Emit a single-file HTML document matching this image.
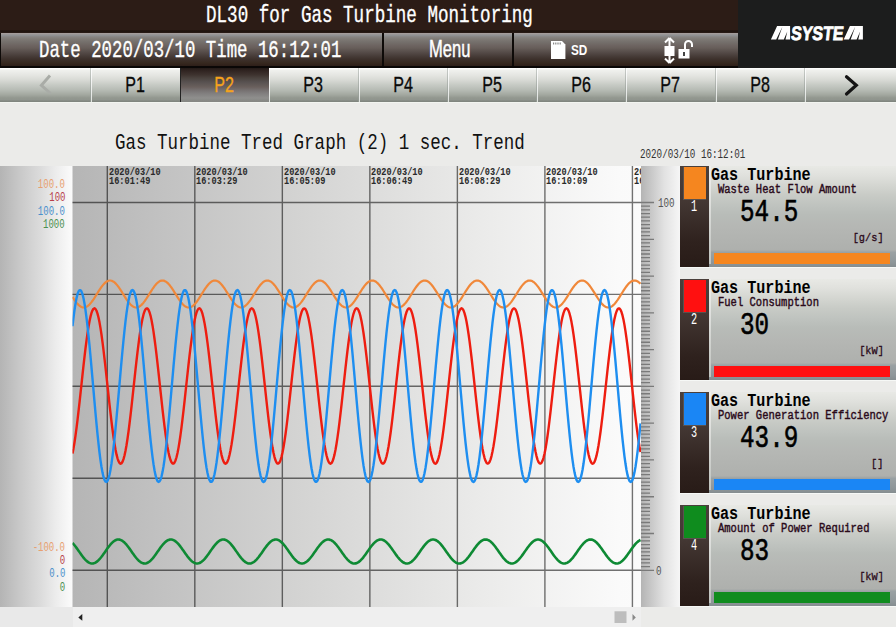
<!DOCTYPE html><html><head><meta charset="utf-8"><style>
html,body{margin:0;padding:0}
body{width:896px;height:627px;overflow:hidden;position:relative;background:#ebebe9;font-family:"Liberation Mono",monospace}
.t{position:absolute;white-space:pre;line-height:1;}
</style></head><body>
<div style="position:absolute;left:0px;top:0px;width:738px;height:33px;background:linear-gradient(#2c1c16 0%,#2c1c16 90%,#1c110c 94%,#2a1d18 100%)"></div>
<div style="position:absolute;left:738px;top:0px;width:158px;height:68px;background:#1c1d1d"></div>
<div style="position:absolute;left:0px;top:33px;width:738px;height:35px;background:#0e0a08"></div>
<div style="position:absolute;left:1px;top:33px;width:381px;height:33px;background:linear-gradient(#a8a09e 0%,#9c9898 3%,#8e9092 7.5%,#868482 12%,#7e7a76 18%,#75706c 27%,#6c6360 39%,#675e5a 45%,#524845 61%,#473c38 70%,#3d312c 79%,#36281f 91%,#2e1f19 100%);"></div>
<div style="position:absolute;left:384px;top:33px;width:128px;height:33px;background:linear-gradient(#a8a09e 0%,#9c9898 3%,#8e9092 7.5%,#868482 12%,#7e7a76 18%,#75706c 27%,#6c6360 39%,#675e5a 45%,#524845 61%,#473c38 70%,#3d312c 79%,#36281f 91%,#2e1f19 100%);"></div>
<div style="position:absolute;left:514px;top:33px;width:224px;height:33px;background:linear-gradient(#a8a09e 0%,#9c9898 3%,#8e9092 7.5%,#868482 12%,#7e7a76 18%,#75706c 27%,#6c6360 39%,#675e5a 45%,#524845 61%,#473c38 70%,#3d312c 79%,#36281f 91%,#2e1f19 100%);"></div>
<div class="t" style="left:206.40px;top:3.98px;font-size:24.3px;color:#fff;font-weight:normal;font-family:'Liberation Mono',monospace;transform-origin:left top;transform:scaleX(0.723);-webkit-text-stroke:0.35px #fff;">DL30 for Gas Turbine Monitoring</div>
<div class="t" style="left:39.00px;top:39.28px;font-size:24.3px;color:#fff;font-weight:normal;font-family:'Liberation Mono',monospace;transform-origin:left top;transform:scaleX(0.715);-webkit-text-stroke:0.35px #fff;">Date 2020/03/10 Time 16:12:01</div>
<div class="t" style="left:429.00px;top:38.08px;font-size:23.3px;color:#fff;font-weight:normal;font-family:'Liberation Sans',monospace;transform-origin:left top;transform:scaleX(0.71);-webkit-text-stroke:0.45px #fff;">Menu</div>
<div class="t" style="left:570.70px;top:43.13px;font-size:14.5px;color:#fff;font-weight:bold;font-family:'Liberation Sans',monospace;transform-origin:left top;transform:scaleX(0.81);">SD</div>
<svg style="position:absolute;left:551px;top:41px" width="15" height="18" viewBox="0 0 15 18"><path d="M0 0H11L14.4 3.4V18H0Z" fill="#fff"/><rect x="2" y="1.5" width="1.2" height="2" fill="#888"/><rect x="4.2" y="1.5" width="1.2" height="2" fill="#888"/><rect x="6.4" y="1.5" width="1.2" height="2" fill="#888"/><rect x="8.6" y="1.5" width="1.2" height="2" fill="#888"/></svg>
<svg style="position:absolute;left:663px;top:37px" width="32" height="28" viewBox="0 0 32 28"><path d="M6.5 1L2 5.5M6.5 1L11 5.5M6.5 1V26M6.5 26L2 21.5M6.5 26L11 21.5" stroke="#fff" stroke-width="2" fill="none"/><rect x="1.5" y="9" width="10" height="10" fill="#fff"/><rect x="15.5" y="12" width="11" height="9.5" fill="#fff"/><path d="M22 12V7.5a3.5 3.5 0 0 1 7 0V10" stroke="#fff" stroke-width="2" fill="none"/><rect x="20" y="15" width="2" height="4" fill="#444"/></svg>
<svg style="position:absolute;left:0;top:0" width="896" height="68"><path transform="translate(770.9,26)" d="M0 13.6L6.2 0H19.2V13.6H14.6L16.4 5.6L12.9 13.6H7.0L11.5 0.8L5.3 13.6Z" fill="#fff"/><path transform="translate(843.7,26)" d="M0 13.6L6.2 0H19.2V13.6H14.6L16.4 5.6L12.9 13.6H7.0L11.5 0.8L5.3 13.6Z" fill="#fff"/><text x="791" y="39.6" font-family="Liberation Sans" font-weight="bold" font-size="19.4" fill="#fff" textLength="52.6" lengthAdjust="spacingAndGlyphs" stroke="#fff" stroke-width="0.8" transform="skewX(-6) translate(3.6,0)">SYSTE</text></svg>
<div style="position:absolute;left:0px;top:66px;width:738px;height:2px;background:#0a0706"></div>
<div style="position:absolute;left:0px;top:102px;width:896px;height:1px;background:#f2f4f0"></div>
<div style="position:absolute;left:0px;top:68px;width:91px;height:34px;background:linear-gradient(#ffffff 0%,#fbfbfa 3%,#f0f1ee 6%,#e5e6e2 20.6%,#d8dad5 35.3%,#c6cac4 50%,#b6bbb4 64.7%,#a2a79f 79.4%,#92978f 88%,#8f948e 94%,#80857f 97%);"></div>
<div style="position:absolute;left:91px;top:68px;width:90px;height:34px;background:linear-gradient(#ffffff 0%,#fbfbfa 3%,#f0f1ee 6%,#e5e6e2 20.6%,#d8dad5 35.3%,#c6cac4 50%,#b6bbb4 64.7%,#a2a79f 79.4%,#92978f 88%,#8f948e 94%,#80857f 97%);"></div>
<div style="position:absolute;left:90px;top:68px;width:1px;height:34px;background:linear-gradient(#c8ccc8,#8f968f)"></div>
<div style="position:absolute;left:91px;top:68px;width:1px;height:34px;background:linear-gradient(#ffffff,#dfe2df)"></div>
<div class="t" style="left:135.00px;top:74.18px;font-size:22px;color:#0a0a0a;font-weight:normal;font-family:'Liberation Sans',monospace;transform-origin:center top;transform:translateX(-50%) scaleX(0.73);-webkit-text-stroke:0.35px #0a0a0a;">P1</div>
<div style="position:absolute;left:181px;top:68px;width:88px;height:34px;background:linear-gradient(#231a17 0%,#2e221f 6%,#3f3430 21%,#4a423e 29%,#575150 41%,#6a605d 56%,#757070 65%,#828080 76%,#8f8f8d 88%,#868784 97%);"></div>
<div style="position:absolute;left:180px;top:68px;width:1px;height:34px;background:#222"></div>
<div class="t" style="left:224.00px;top:74.18px;font-size:22px;color:#f5a21c;font-weight:normal;font-family:'Liberation Sans',monospace;transform-origin:center top;transform:translateX(-50%) scaleX(0.73);-webkit-text-stroke:0.35px #f5a21c;">P2</div>
<div style="position:absolute;left:269px;top:68px;width:90px;height:34px;background:linear-gradient(#ffffff 0%,#fbfbfa 3%,#f0f1ee 6%,#e5e6e2 20.6%,#d8dad5 35.3%,#c6cac4 50%,#b6bbb4 64.7%,#a2a79f 79.4%,#92978f 88%,#8f948e 94%,#80857f 97%);"></div>
<div style="position:absolute;left:269px;top:68px;width:1px;height:34px;background:linear-gradient(#ffffff,#dfe2df)"></div>
<div class="t" style="left:313.00px;top:74.18px;font-size:22px;color:#0a0a0a;font-weight:normal;font-family:'Liberation Sans',monospace;transform-origin:center top;transform:translateX(-50%) scaleX(0.73);-webkit-text-stroke:0.35px #0a0a0a;">P3</div>
<div style="position:absolute;left:359px;top:68px;width:89px;height:34px;background:linear-gradient(#ffffff 0%,#fbfbfa 3%,#f0f1ee 6%,#e5e6e2 20.6%,#d8dad5 35.3%,#c6cac4 50%,#b6bbb4 64.7%,#a2a79f 79.4%,#92978f 88%,#8f948e 94%,#80857f 97%);"></div>
<div style="position:absolute;left:358px;top:68px;width:1px;height:34px;background:linear-gradient(#c8ccc8,#8f968f)"></div>
<div style="position:absolute;left:359px;top:68px;width:1px;height:34px;background:linear-gradient(#ffffff,#dfe2df)"></div>
<div class="t" style="left:402.50px;top:74.18px;font-size:22px;color:#0a0a0a;font-weight:normal;font-family:'Liberation Sans',monospace;transform-origin:center top;transform:translateX(-50%) scaleX(0.73);-webkit-text-stroke:0.35px #0a0a0a;">P4</div>
<div style="position:absolute;left:448px;top:68px;width:89px;height:34px;background:linear-gradient(#ffffff 0%,#fbfbfa 3%,#f0f1ee 6%,#e5e6e2 20.6%,#d8dad5 35.3%,#c6cac4 50%,#b6bbb4 64.7%,#a2a79f 79.4%,#92978f 88%,#8f948e 94%,#80857f 97%);"></div>
<div style="position:absolute;left:447px;top:68px;width:1px;height:34px;background:linear-gradient(#c8ccc8,#8f968f)"></div>
<div style="position:absolute;left:448px;top:68px;width:1px;height:34px;background:linear-gradient(#ffffff,#dfe2df)"></div>
<div class="t" style="left:491.50px;top:74.18px;font-size:22px;color:#0a0a0a;font-weight:normal;font-family:'Liberation Sans',monospace;transform-origin:center top;transform:translateX(-50%) scaleX(0.73);-webkit-text-stroke:0.35px #0a0a0a;">P5</div>
<div style="position:absolute;left:537px;top:68px;width:89px;height:34px;background:linear-gradient(#ffffff 0%,#fbfbfa 3%,#f0f1ee 6%,#e5e6e2 20.6%,#d8dad5 35.3%,#c6cac4 50%,#b6bbb4 64.7%,#a2a79f 79.4%,#92978f 88%,#8f948e 94%,#80857f 97%);"></div>
<div style="position:absolute;left:536px;top:68px;width:1px;height:34px;background:linear-gradient(#c8ccc8,#8f968f)"></div>
<div style="position:absolute;left:537px;top:68px;width:1px;height:34px;background:linear-gradient(#ffffff,#dfe2df)"></div>
<div class="t" style="left:580.50px;top:74.18px;font-size:22px;color:#0a0a0a;font-weight:normal;font-family:'Liberation Sans',monospace;transform-origin:center top;transform:translateX(-50%) scaleX(0.73);-webkit-text-stroke:0.35px #0a0a0a;">P6</div>
<div style="position:absolute;left:626px;top:68px;width:90px;height:34px;background:linear-gradient(#ffffff 0%,#fbfbfa 3%,#f0f1ee 6%,#e5e6e2 20.6%,#d8dad5 35.3%,#c6cac4 50%,#b6bbb4 64.7%,#a2a79f 79.4%,#92978f 88%,#8f948e 94%,#80857f 97%);"></div>
<div style="position:absolute;left:625px;top:68px;width:1px;height:34px;background:linear-gradient(#c8ccc8,#8f968f)"></div>
<div style="position:absolute;left:626px;top:68px;width:1px;height:34px;background:linear-gradient(#ffffff,#dfe2df)"></div>
<div class="t" style="left:670.00px;top:74.18px;font-size:22px;color:#0a0a0a;font-weight:normal;font-family:'Liberation Sans',monospace;transform-origin:center top;transform:translateX(-50%) scaleX(0.73);-webkit-text-stroke:0.35px #0a0a0a;">P7</div>
<div style="position:absolute;left:716px;top:68px;width:89px;height:34px;background:linear-gradient(#ffffff 0%,#fbfbfa 3%,#f0f1ee 6%,#e5e6e2 20.6%,#d8dad5 35.3%,#c6cac4 50%,#b6bbb4 64.7%,#a2a79f 79.4%,#92978f 88%,#8f948e 94%,#80857f 97%);"></div>
<div style="position:absolute;left:715px;top:68px;width:1px;height:34px;background:linear-gradient(#c8ccc8,#8f968f)"></div>
<div style="position:absolute;left:716px;top:68px;width:1px;height:34px;background:linear-gradient(#ffffff,#dfe2df)"></div>
<div class="t" style="left:759.50px;top:74.18px;font-size:22px;color:#0a0a0a;font-weight:normal;font-family:'Liberation Sans',monospace;transform-origin:center top;transform:translateX(-50%) scaleX(0.73);-webkit-text-stroke:0.35px #0a0a0a;">P8</div>
<div style="position:absolute;left:805px;top:68px;width:91px;height:34px;background:linear-gradient(#ffffff 0%,#fbfbfa 3%,#f0f1ee 6%,#e5e6e2 20.6%,#d8dad5 35.3%,#c6cac4 50%,#b6bbb4 64.7%,#a2a79f 79.4%,#92978f 88%,#8f948e 94%,#80857f 97%);"></div>
<div style="position:absolute;left:804px;top:68px;width:1px;height:34px;background:linear-gradient(#c8ccc8,#8f968f)"></div>
<div style="position:absolute;left:805px;top:68px;width:1px;height:34px;background:linear-gradient(#ffffff,#dfe2df)"></div>
<svg style="position:absolute;left:0;top:68px" width="896" height="34"><polyline points="50,7.6 41.4,17.3 50.6,25.5" stroke="#a9aca7" stroke-width="3" fill="none"/><polyline points="846.5,8.7 856.3,17.3 846.5,26" stroke="#141414" stroke-width="3.2" fill="none" stroke-linecap="round"/></svg>
<div class="t" style="left:115.40px;top:131.53px;font-size:22.8px;color:#111;font-weight:normal;font-family:'Liberation Mono',monospace;transform-origin:left top;transform:scaleX(0.768);">Gas Turbine Tred Graph (2) 1 sec. Trend</div>
<div class="t" style="left:639.90px;top:147.99px;font-size:13.2px;color:#333;font-weight:normal;font-family:'Liberation Mono',monospace;transform-origin:left top;transform:scaleX(0.7);">2020/03/10 16:12:01</div>
<div style="position:absolute;left:0px;top:166px;width:72.5px;height:441px;background:linear-gradient(90deg,#b4b4b4 0%,#c9c9c9 28%,#dbdbdb 55%,#ececec 76%,#f8f8f8 94%,#fbfbfb 100%)"></div>
<svg style="position:absolute;left:0;top:0" width="896" height="627" viewBox="0 0 896 627"><defs><linearGradient id="pg" x1="0" x2="1" y1="0" y2="0"><stop offset="0" stop-color="#b5b5b5"/><stop offset="0.15" stop-color="#c1c1c1"/><stop offset="0.42" stop-color="#d5d5d4"/><stop offset="0.72" stop-color="#ebebea"/><stop offset="0.96" stop-color="#fafafa"/><stop offset="1" stop-color="#fbfbfb"/></linearGradient><linearGradient id="rg" x1="0" x2="1" y1="0" y2="0"><stop offset="0" stop-color="#b4b4b4"/><stop offset="0.6" stop-color="#e2e2e2"/><stop offset="1" stop-color="#f6f6f6"/></linearGradient><clipPath id="cp"><rect x="72.5" y="166" width="568.5" height="441"/></clipPath></defs><rect x="72.5" y="166" width="568.5" height="441" fill="url(#pg)"/><rect x="641" y="166" width="39" height="441" fill="url(#rg)"/><path d="M107.3 166V607M194.82 166V607M282.34 166V607M369.86 166V607M457.38 166V607M544.9 166V607M632.42 166V607M72.5 202.5H641M72.5 294.4H641M72.5 386.3H641M72.5 478.3H641M72.5 570.3H641" stroke="#000" stroke-opacity="0.55" stroke-width="1.4" fill="none"/><polyline clip-path="url(#cp)" points="72.5,296.95 73.5,298.50 74.5,299.99 75.5,301.39 76.5,302.69 77.5,303.86 78.5,304.89 79.5,305.77 80.5,306.47 81.5,307.00 82.5,307.34 83.5,307.49 84.5,307.45 85.5,307.21 86.5,306.79 87.5,306.18 88.5,305.39 89.5,304.45 90.5,303.35 91.5,302.12 92.5,300.77 93.5,299.33 94.5,297.81 95.5,296.23 96.5,294.63 97.5,293.01 98.5,291.41 99.5,289.84 100.5,288.34 101.5,286.91 102.5,285.59 103.5,284.39 104.5,283.33 105.5,282.41 106.5,281.67 107.5,281.10 108.5,280.72 109.5,280.52 110.5,280.52 111.5,280.72 112.5,281.10 113.5,281.67 114.5,282.41 115.5,283.33 116.5,284.39 117.5,285.59 118.5,286.91 119.5,288.34 120.5,289.84 121.5,291.41 122.5,293.01 123.5,294.63 124.5,296.23 125.5,297.81 126.5,299.33 127.5,300.77 128.5,302.12 129.5,303.35 130.5,304.45 131.5,305.39 132.5,306.18 133.5,306.79 134.5,307.21 135.5,307.45 136.5,307.49 137.5,307.34 138.5,307.00 139.5,306.47 140.5,305.77 141.5,304.89 142.5,303.86 143.5,302.69 144.5,301.39 145.5,299.99 146.5,298.50 147.5,296.95 148.5,295.35 149.5,293.74 150.5,292.13 151.5,290.54 152.5,289.01 153.5,287.54 154.5,286.17 155.5,284.91 156.5,283.79 157.5,282.80 158.5,281.98 159.5,281.33 160.5,280.87 161.5,280.59 162.5,280.50 163.5,280.61 164.5,280.91 165.5,281.39 166.5,282.06 167.5,282.90 168.5,283.89 169.5,285.04 170.5,286.31 171.5,287.69 172.5,289.16 173.5,290.70 174.5,292.29 175.5,293.90 176.5,295.51 177.5,297.11 178.5,298.65 179.5,300.13 180.5,301.53 181.5,302.81 182.5,303.97 183.5,304.99 184.5,305.85 185.5,306.54 186.5,307.04 187.5,307.37 188.5,307.50 189.5,307.43 190.5,307.18 191.5,306.73 192.5,306.11 193.5,305.31 194.5,304.34 195.5,303.23 196.5,301.99 197.5,300.63 198.5,299.18 199.5,297.65 200.5,296.07 201.5,294.46 202.5,292.85 203.5,291.25 204.5,289.69 205.5,288.19 206.5,286.78 207.5,285.47 208.5,284.28 209.5,283.23 210.5,282.33 211.5,281.60 212.5,281.05 213.5,280.69 214.5,280.52 215.5,280.53 216.5,280.75 217.5,281.15 218.5,281.74 219.5,282.50 220.5,283.43 221.5,284.50 222.5,285.72 223.5,287.05 224.5,288.49 225.5,290.00 226.5,291.57 227.5,293.17 228.5,294.79 229.5,296.39 230.5,297.96 231.5,299.48 232.5,300.91 233.5,302.25 234.5,303.47 235.5,304.55 236.5,305.48 237.5,306.25 238.5,306.84 239.5,307.25 240.5,307.46 241.5,307.49 242.5,307.32 243.5,306.96 244.5,306.41 245.5,305.69 246.5,304.80 247.5,303.75 248.5,302.57 249.5,301.26 250.5,299.84 251.5,298.35 252.5,296.79 253.5,295.19 254.5,293.58 255.5,291.97 256.5,290.39 257.5,288.86 258.5,287.40 259.5,286.04 260.5,284.80 261.5,283.68 262.5,282.72 263.5,281.91 264.5,281.28 265.5,280.83 266.5,280.57 267.5,280.50 268.5,280.63 269.5,280.95 270.5,281.45 271.5,282.13 272.5,282.99 273.5,284.00 274.5,285.16 275.5,286.44 276.5,287.83 277.5,289.31 278.5,290.86 279.5,292.45 280.5,294.06 281.5,295.67 282.5,297.26 283.5,298.80 284.5,300.28 285.5,301.66 286.5,302.93 287.5,304.08 288.5,305.08 289.5,305.92 290.5,306.59 291.5,307.09 292.5,307.39 293.5,307.50 294.5,307.42 295.5,307.14 296.5,306.68 297.5,306.04 298.5,305.22 299.5,304.24 300.5,303.12 301.5,301.86 302.5,300.49 303.5,299.03 304.5,297.50 305.5,295.91 306.5,294.30 307.5,292.69 308.5,291.09 309.5,289.54 310.5,288.05 311.5,286.64 312.5,285.34 313.5,284.17 314.5,283.13 315.5,282.25 316.5,281.54 317.5,281.01 318.5,280.66 319.5,280.51 320.5,280.55 321.5,280.78 322.5,281.20 323.5,281.80 324.5,282.58 325.5,283.53 326.5,284.62 327.5,285.85 328.5,287.19 329.5,288.63 330.5,290.15 331.5,291.73 332.5,293.33 333.5,294.95 334.5,296.55 335.5,298.12 336.5,299.62 337.5,301.05 338.5,302.38 339.5,303.58 340.5,304.65 341.5,305.56 342.5,306.31 343.5,306.89 344.5,307.28 345.5,307.47 346.5,307.48 347.5,307.29 348.5,306.91 349.5,306.35 350.5,305.61 351.5,304.70 352.5,303.64 353.5,302.44 354.5,301.12 355.5,299.70 356.5,298.19 357.5,296.63 358.5,295.03 359.5,293.41 360.5,291.81 361.5,290.23 362.5,288.71 363.5,287.26 364.5,285.91 365.5,284.68 366.5,283.58 367.5,282.63 368.5,281.84 369.5,281.23 370.5,280.80 371.5,280.55 372.5,280.51 373.5,280.65 374.5,280.99 375.5,281.51 376.5,282.21 377.5,283.08 378.5,284.11 379.5,285.28 380.5,286.57 381.5,287.97 382.5,289.46 383.5,291.01 384.5,292.61 385.5,294.22 386.5,295.83 387.5,297.42 388.5,298.96 389.5,300.42 390.5,301.79 391.5,303.06 392.5,304.19 393.5,305.17 394.5,306.00 395.5,306.65 396.5,307.12 397.5,307.41 398.5,307.50 399.5,307.40 400.5,307.10 401.5,306.62 402.5,305.96 403.5,305.13 404.5,304.13 405.5,303.00 406.5,301.73 407.5,300.35 408.5,298.88 409.5,297.34 410.5,295.75 411.5,294.14 412.5,292.53 413.5,290.93 414.5,289.38 415.5,287.90 416.5,286.51 417.5,285.22 418.5,284.06 419.5,283.04 420.5,282.17 421.5,281.48 422.5,280.97 423.5,280.64 424.5,280.50 425.5,280.56 426.5,280.81 427.5,281.25 428.5,281.87 429.5,282.67 430.5,283.63 431.5,284.74 432.5,285.98 433.5,287.33 434.5,288.78 435.5,290.31 436.5,291.89 437.5,293.49 438.5,295.11 439.5,296.71 440.5,298.27 441.5,299.77 442.5,301.19 443.5,302.50 444.5,303.69 445.5,304.75 446.5,305.65 447.5,306.38 448.5,306.93 449.5,307.30 450.5,307.48 451.5,307.47 452.5,307.26 453.5,306.86 454.5,306.28 455.5,305.52 456.5,304.60 457.5,303.52 458.5,302.31 459.5,300.98 460.5,299.55 461.5,298.04 462.5,296.47 463.5,294.87 464.5,293.25 465.5,291.65 466.5,290.08 467.5,288.56 468.5,287.12 469.5,285.78 470.5,284.56 471.5,283.48 472.5,282.54 473.5,281.77 474.5,281.17 475.5,280.76 476.5,280.54 477.5,280.51 478.5,280.68 479.5,281.03 480.5,281.57 481.5,282.29 482.5,283.18 483.5,284.22 484.5,285.40 485.5,286.71 486.5,288.12 487.5,289.61 488.5,291.17 489.5,292.77 490.5,294.38 491.5,295.99 492.5,297.58 493.5,299.11 494.5,300.56 495.5,301.93 496.5,303.17 497.5,304.29 498.5,305.26 499.5,306.07 500.5,306.71 501.5,307.16 502.5,307.43 503.5,307.50 504.5,307.38 505.5,307.06 506.5,306.57 507.5,305.89 508.5,305.03 509.5,304.03 510.5,302.87 511.5,301.59 512.5,300.21 513.5,298.73 514.5,297.18 515.5,295.59 516.5,293.98 517.5,292.37 518.5,290.78 519.5,289.23 520.5,287.76 521.5,286.37 522.5,285.10 523.5,283.95 524.5,282.94 525.5,282.10 526.5,281.42 527.5,280.92 528.5,280.62 529.5,280.50 530.5,280.58 531.5,280.85 532.5,281.31 533.5,281.95 534.5,282.76 535.5,283.73 536.5,284.86 537.5,286.11 538.5,287.47 539.5,288.93 540.5,290.46 541.5,292.05 542.5,293.66 543.5,295.27 544.5,296.87 545.5,298.42 546.5,299.92 547.5,301.32 548.5,302.63 549.5,303.81 550.5,304.85 551.5,305.73 552.5,306.44 553.5,306.98 554.5,307.33 555.5,307.49 556.5,307.46 557.5,307.23 558.5,306.81 559.5,306.21 560.5,305.44 561.5,304.50 562.5,303.41 563.5,302.18 564.5,300.84 565.5,299.40 566.5,297.89 567.5,296.31 568.5,294.71 569.5,293.09 570.5,291.49 571.5,289.92 572.5,288.41 573.5,286.98 574.5,285.66 575.5,284.45 576.5,283.38 577.5,282.46 578.5,281.70 579.5,281.12 580.5,280.73 581.5,280.53 582.5,280.52 583.5,280.70 584.5,281.08 585.5,281.64 586.5,282.37 587.5,283.28 588.5,284.33 589.5,285.53 590.5,286.85 591.5,288.27 592.5,289.77 593.5,291.33 594.5,292.93 595.5,294.55 596.5,296.15 597.5,297.73 598.5,299.25 599.5,300.70 600.5,302.06 601.5,303.29 602.5,304.40 603.5,305.35 604.5,306.14 605.5,306.76 606.5,307.20 607.5,307.44 608.5,307.50 609.5,307.35 610.5,307.02 611.5,306.50 612.5,305.81 613.5,304.94 614.5,303.92 615.5,302.75 616.5,301.46 617.5,300.06 618.5,298.58 619.5,297.03 620.5,295.43 621.5,293.82 622.5,292.21 623.5,290.62 624.5,289.08 625.5,287.61 626.5,286.24 627.5,284.97 628.5,283.84 629.5,282.85 630.5,282.02 631.5,281.36 632.5,280.89 633.5,280.60 634.5,280.50 635.5,280.60 636.5,280.89 637.5,281.36 638.5,282.02 639.5,282.85 640.5,283.84" stroke="#f0883a" stroke-width="2.2" fill="none" stroke-linejoin="round"/><polyline clip-path="url(#cp)" points="72.5,453.50 73.5,448.42 74.5,442.44 75.5,435.66 76.5,428.16 77.5,420.06 78.5,411.47 79.5,402.51 80.5,393.32 81.5,384.02 82.5,374.75 83.5,365.65 84.5,356.83 85.5,348.43 86.5,340.57 87.5,333.37 88.5,326.91 89.5,321.31 90.5,316.63 91.5,312.94 92.5,310.30 93.5,308.75 94.5,308.31 95.5,308.97 96.5,310.75 97.5,313.60 98.5,317.49 99.5,322.36 100.5,328.14 101.5,334.75 102.5,342.10 103.5,350.07 104.5,358.56 105.5,367.45 106.5,376.60 107.5,385.88 108.5,395.17 109.5,404.33 110.5,413.22 111.5,421.72 112.5,429.71 113.5,437.07 114.5,443.71 115.5,449.51 116.5,454.40 117.5,458.32 118.5,461.20 119.5,463.00 120.5,463.69 121.5,463.27 122.5,461.75 123.5,459.14 124.5,455.48 125.5,450.82 126.5,445.24 127.5,438.80 128.5,431.61 129.5,423.77 130.5,415.38 131.5,406.58 132.5,397.48 133.5,388.21 134.5,378.91 135.5,369.72 136.5,360.75 137.5,352.15 138.5,344.04 139.5,336.52 140.5,329.72 141.5,323.72 142.5,318.61 143.5,314.47 144.5,311.36 145.5,309.31 146.5,308.37 147.5,308.54 148.5,309.81 149.5,312.18 150.5,315.61 151.5,320.05 152.5,325.43 153.5,331.68 154.5,338.71 155.5,346.41 156.5,354.69 157.5,363.41 158.5,372.46 159.5,381.70 160.5,391.00 161.5,400.23 162.5,409.26 163.5,417.95 164.5,426.19 165.5,433.85 166.5,440.82 167.5,447.01 168.5,452.32 169.5,456.68 170.5,460.03 171.5,462.32 172.5,463.52 173.5,463.60 174.5,462.57 175.5,460.44 176.5,457.25 177.5,453.04 178.5,447.86 179.5,441.80 180.5,434.94 181.5,427.37 182.5,419.22 183.5,410.59 184.5,401.60 185.5,392.39 186.5,383.09 187.5,373.83 188.5,364.75 189.5,355.97 190.5,347.62 191.5,339.82 192.5,332.69 193.5,326.31 194.5,320.80 195.5,316.21 196.5,312.63 197.5,310.10 198.5,308.66 199.5,308.32 200.5,309.10 201.5,310.98 202.5,313.94 203.5,317.93 204.5,322.89 205.5,328.76 206.5,335.45 207.5,342.87 208.5,350.90 209.5,359.44 210.5,368.35 211.5,377.52 212.5,386.81 213.5,396.09 214.5,405.23 215.5,414.09 216.5,422.54 217.5,430.48 218.5,437.77 219.5,444.33 220.5,450.04 221.5,454.84 222.5,458.65 223.5,461.43 224.5,463.11 225.5,463.70 226.5,463.17 227.5,461.54 228.5,458.82 229.5,455.06 230.5,450.30 231.5,444.63 232.5,438.12 233.5,430.86 234.5,422.95 235.5,414.52 236.5,405.68 237.5,396.56 238.5,387.28 239.5,377.99 240.5,368.81 241.5,359.88 242.5,351.32 243.5,343.26 244.5,335.81 245.5,329.08 246.5,323.17 247.5,318.15 248.5,314.11 249.5,311.11 250.5,309.17 251.5,308.33 252.5,308.61 253.5,310.00 254.5,312.48 255.5,316.01 256.5,320.54 257.5,326.02 258.5,332.35 259.5,339.45 260.5,347.22 261.5,355.54 262.5,364.30 263.5,373.37 264.5,382.63 265.5,391.93 266.5,401.14 267.5,410.14 268.5,418.80 269.5,426.98 270.5,434.57 271.5,441.47 272.5,447.58 273.5,452.80 274.5,457.06 275.5,460.31 276.5,462.49 277.5,463.57 278.5,463.55 279.5,462.41 280.5,460.17 281.5,456.87 282.5,452.56 283.5,447.29 284.5,441.15 285.5,434.21 286.5,426.58 287.5,418.37 288.5,409.70 289.5,400.69 290.5,391.46 291.5,382.16 292.5,372.92 293.5,363.86 294.5,355.11 295.5,346.81 296.5,339.08 297.5,332.01 298.5,325.72 299.5,320.29 300.5,315.81 301.5,312.33 302.5,309.91 303.5,308.57 304.5,308.35 305.5,309.24 306.5,311.23 307.5,314.29 308.5,318.38 309.5,323.44 310.5,329.40 311.5,336.16 312.5,343.65 313.5,351.73 314.5,360.31 315.5,369.26 316.5,378.45 317.5,387.75 318.5,397.02 319.5,406.13 320.5,414.95 321.5,423.36 322.5,431.24 323.5,438.46 324.5,444.94 325.5,450.56 326.5,455.27 327.5,458.98 328.5,461.64 329.5,463.22 330.5,463.70 331.5,463.06 332.5,461.31 333.5,458.49 334.5,454.62 335.5,449.78 336.5,444.02 337.5,437.42 338.5,430.09 339.5,422.13 340.5,413.65 341.5,404.78 342.5,395.63 343.5,386.35 344.5,377.06 345.5,367.90 346.5,359.00 347.5,350.49 348.5,342.48 349.5,335.10 350.5,328.45 351.5,322.62 352.5,317.71 353.5,313.77 354.5,310.86 355.5,309.04 356.5,308.31 357.5,308.70 358.5,310.20 359.5,312.78 360.5,316.42 361.5,321.05 362.5,326.61 363.5,333.02 364.5,340.20 365.5,348.03 366.5,356.40 367.5,365.20 368.5,374.29 369.5,383.56 370.5,392.86 371.5,402.06 372.5,411.03 373.5,419.64 374.5,427.77 375.5,435.30 376.5,442.12 377.5,448.14 378.5,453.27 379.5,457.44 380.5,460.58 381.5,462.65 382.5,463.62 383.5,463.48 384.5,462.23 385.5,459.89 386.5,456.49 387.5,452.08 388.5,446.72 389.5,440.49 390.5,433.48 391.5,425.79 392.5,417.53 393.5,408.81 394.5,399.77 395.5,390.54 396.5,381.23 397.5,372.00 398.5,362.97 399.5,354.26 400.5,346.01 401.5,338.34 402.5,331.35 403.5,325.14 404.5,319.80 405.5,315.41 406.5,312.04 407.5,309.72 408.5,308.50 409.5,308.39 410.5,309.39 411.5,311.49 412.5,314.66 413.5,318.85 414.5,324.00 415.5,330.04 416.5,336.88 417.5,344.43 418.5,352.57 419.5,361.19 420.5,370.17 421.5,379.38 422.5,388.68 423.5,397.94 424.5,407.03 425.5,415.82 426.5,424.18 427.5,431.99 428.5,439.15 429.5,445.54 430.5,451.08 431.5,455.68 432.5,459.29 433.5,461.85 434.5,463.32 435.5,463.68 436.5,462.93 437.5,461.08 438.5,458.15 439.5,454.18 440.5,449.24 441.5,443.39 442.5,436.72 443.5,429.32 444.5,421.31 445.5,412.78 446.5,403.87 447.5,394.71 448.5,385.42 449.5,376.14 450.5,367.00 451.5,358.13 452.5,349.66 453.5,341.71 454.5,334.40 455.5,327.83 456.5,322.09 457.5,317.27 458.5,313.43 459.5,310.63 460.5,308.91 461.5,308.30 462.5,308.80 463.5,310.41 464.5,313.10 465.5,316.84 466.5,321.56 467.5,327.22 468.5,333.71 469.5,340.95 470.5,348.84 471.5,357.26 472.5,366.10 473.5,375.21 474.5,384.49 475.5,393.78 476.5,402.97 477.5,411.91 478.5,420.47 479.5,428.55 480.5,436.01 481.5,442.76 482.5,448.70 483.5,453.73 484.5,457.80 485.5,460.83 486.5,462.80 487.5,463.66 488.5,463.41 489.5,462.05 490.5,459.60 491.5,456.09 492.5,451.58 493.5,446.13 494.5,439.82 495.5,432.74 496.5,424.98 497.5,416.67 498.5,407.92 499.5,398.86 500.5,389.61 501.5,380.30 502.5,371.08 503.5,362.08 504.5,353.41 505.5,345.22 506.5,337.61 507.5,330.69 508.5,324.56 509.5,319.32 510.5,315.03 511.5,311.76 512.5,309.55 513.5,308.44 514.5,308.44 515.5,309.55 516.5,311.76 517.5,315.03 518.5,319.32 519.5,324.56 520.5,330.69 521.5,337.61 522.5,345.22 523.5,353.41 524.5,362.08 525.5,371.08 526.5,380.30 527.5,389.61 528.5,398.86 529.5,407.92 530.5,416.67 531.5,424.98 532.5,432.74 533.5,439.82 534.5,446.13 535.5,451.58 536.5,456.09 537.5,459.60 538.5,462.05 539.5,463.41 540.5,463.66 541.5,462.80 542.5,460.83 543.5,457.80 544.5,453.73 545.5,448.70 546.5,442.76 547.5,436.01 548.5,428.55 549.5,420.47 550.5,411.91 551.5,402.97 552.5,393.78 553.5,384.49 554.5,375.21 555.5,366.10 556.5,357.26 557.5,348.84 558.5,340.95 559.5,333.71 560.5,327.22 561.5,321.56 562.5,316.84 563.5,313.10 564.5,310.41 565.5,308.80 566.5,308.30 567.5,308.91 568.5,310.63 569.5,313.43 570.5,317.27 571.5,322.09 572.5,327.83 573.5,334.40 574.5,341.71 575.5,349.66 576.5,358.13 577.5,367.00 578.5,376.14 579.5,385.42 580.5,394.71 581.5,403.87 582.5,412.78 583.5,421.31 584.5,429.32 585.5,436.72 586.5,443.39 587.5,449.24 588.5,454.18 589.5,458.15 590.5,461.08 591.5,462.93 592.5,463.68 593.5,463.32 594.5,461.85 595.5,459.29 596.5,455.68 597.5,451.08 598.5,445.54 599.5,439.15 600.5,431.99 601.5,424.18 602.5,415.82 603.5,407.03 604.5,397.94 605.5,388.68 606.5,379.38 607.5,370.17 608.5,361.19 609.5,352.57 610.5,344.43 611.5,336.88 612.5,330.04 613.5,324.00 614.5,318.85 615.5,314.66 616.5,311.49 617.5,309.39 618.5,308.39 619.5,308.50 620.5,309.72 621.5,312.04 622.5,315.41 623.5,319.80 624.5,325.14 625.5,331.35 626.5,338.34 627.5,346.01 628.5,354.26 629.5,362.97 630.5,372.00 631.5,381.23 632.5,390.54 633.5,399.77 634.5,408.81 635.5,417.53 636.5,425.79 637.5,433.48 638.5,440.49 639.5,446.72 640.5,452.08" stroke="#ee1d10" stroke-width="2.4" fill="none" stroke-linejoin="round"/><polyline clip-path="url(#cp)" points="72.5,326.21 73.5,317.66 74.5,310.09 75.5,303.61 76.5,298.32 77.5,294.27 78.5,291.55 79.5,290.17 80.5,290.17 81.5,291.55 82.5,294.27 83.5,298.32 84.5,303.61 85.5,310.09 86.5,317.66 87.5,326.21 88.5,335.61 89.5,345.74 90.5,356.44 91.5,367.57 92.5,378.96 93.5,390.45 94.5,401.88 95.5,413.08 96.5,423.90 97.5,434.17 98.5,443.74 99.5,452.50 100.5,460.29 101.5,467.03 102.5,472.60 103.5,476.93 104.5,479.96 105.5,481.64 106.5,481.95 107.5,480.88 108.5,478.46 109.5,474.71 110.5,469.68 111.5,463.46 112.5,456.13 113.5,447.79 114.5,438.57 115.5,428.59 116.5,418.01 117.5,406.96 118.5,395.62 119.5,384.13 120.5,372.67 121.5,361.41 122.5,350.49 123.5,340.09 124.5,330.34 125.5,321.39 126.5,313.37 127.5,306.39 128.5,300.55 129.5,295.93 130.5,292.61 131.5,290.62 132.5,290.00 133.5,290.76 134.5,292.88 135.5,296.34 136.5,301.08 137.5,307.04 138.5,314.13 139.5,322.25 140.5,331.28 141.5,341.10 142.5,351.57 143.5,362.52 144.5,373.81 145.5,385.28 146.5,396.76 147.5,408.08 148.5,419.09 149.5,429.62 150.5,439.53 151.5,448.67 152.5,456.91 153.5,464.14 154.5,470.24 155.5,475.14 156.5,478.76 157.5,481.05 158.5,481.98 159.5,481.53 160.5,479.71 161.5,476.55 162.5,472.10 163.5,466.41 164.5,459.56 165.5,451.66 166.5,442.82 167.5,433.17 168.5,422.84 169.5,411.98 170.5,400.75 171.5,389.31 172.5,377.82 173.5,366.44 174.5,355.35 175.5,344.70 176.5,334.64 177.5,325.31 178.5,316.86 179.5,309.40 180.5,303.03 181.5,297.85 182.5,293.94 183.5,291.35 184.5,290.11 185.5,290.25 186.5,291.76 187.5,294.62 188.5,298.79 189.5,304.21 190.5,310.80 191.5,318.47 192.5,327.11 193.5,336.60 194.5,346.79 195.5,357.54 196.5,368.70 197.5,380.11 198.5,391.60 199.5,403.02 200.5,414.19 201.5,424.95 202.5,435.16 203.5,444.66 204.5,453.32 205.5,461.02 206.5,467.64 207.5,473.09 208.5,477.29 209.5,480.19 210.5,481.73 211.5,481.90 212.5,480.70 213.5,478.14 214.5,474.26 215.5,469.11 216.5,462.78 217.5,455.34 218.5,446.91 219.5,437.60 220.5,427.56 221.5,416.92 222.5,405.84 223.5,394.47 224.5,382.98 225.5,371.54 226.5,360.30 227.5,349.43 228.5,339.08 229.5,329.41 230.5,320.55 231.5,312.62 232.5,305.75 233.5,300.03 234.5,295.54 235.5,292.35 236.5,290.50 237.5,290.02 238.5,290.91 239.5,293.17 240.5,296.75 241.5,301.62 242.5,307.70 243.5,314.90 244.5,323.11 245.5,332.23 246.5,342.12 247.5,352.64 248.5,363.64 249.5,374.96 250.5,386.43 251.5,397.90 252.5,409.20 253.5,420.17 254.5,430.64 255.5,440.48 256.5,449.54 257.5,457.68 258.5,464.80 259.5,470.79 260.5,475.56 261.5,479.05 262.5,481.21 263.5,482.00 264.5,481.41 265.5,479.46 266.5,476.17 267.5,471.58 268.5,465.77 269.5,458.82 270.5,450.82 271.5,441.89 272.5,432.16 273.5,421.77 274.5,410.87 275.5,399.61 276.5,388.16 277.5,376.67 278.5,365.32 279.5,354.26 280.5,343.66 281.5,333.67 282.5,324.43 283.5,316.07 284.5,308.71 285.5,302.46 286.5,297.40 287.5,293.62 288.5,291.16 289.5,290.06 290.5,290.34 291.5,291.98 292.5,294.98 293.5,299.28 294.5,304.82 295.5,311.52 296.5,319.30 297.5,328.03 298.5,337.59 299.5,347.84 300.5,358.64 301.5,369.83 302.5,381.26 303.5,392.75 304.5,404.15 305.5,415.28 306.5,426.00 307.5,436.14 308.5,445.57 309.5,454.14 310.5,461.73 311.5,468.24 312.5,473.57 313.5,477.64 314.5,480.40 315.5,481.81 316.5,481.84 317.5,480.51 318.5,477.81 319.5,473.80 320.5,468.53 321.5,462.08 322.5,454.54 323.5,446.02 324.5,436.63 325.5,426.52 326.5,415.83 327.5,404.71 328.5,393.32 329.5,381.83 330.5,370.40 331.5,359.19 332.5,348.37 333.5,338.08 334.5,328.49 335.5,319.71 336.5,311.89 337.5,305.13 338.5,299.52 339.5,295.16 340.5,292.10 341.5,290.39 342.5,290.04 343.5,291.07 344.5,293.47 345.5,297.18 346.5,302.18 347.5,308.37 348.5,315.67 349.5,323.99 350.5,333.19 351.5,343.15 352.5,353.72 353.5,364.76 354.5,376.10 355.5,387.58 356.5,399.04 357.5,410.31 358.5,421.24 359.5,431.66 360.5,441.42 361.5,450.39 362.5,458.44 363.5,465.45 364.5,471.32 365.5,475.97 366.5,479.33 367.5,481.35 368.5,482.00 369.5,481.28 370.5,479.19 371.5,475.77 372.5,471.06 373.5,465.13 374.5,458.06 375.5,449.97 376.5,440.95 377.5,431.15 378.5,420.70 379.5,409.76 380.5,398.47 381.5,387.01 382.5,375.53 383.5,364.20 384.5,353.18 385.5,342.63 386.5,332.71 387.5,323.55 388.5,315.28 389.5,308.03 390.5,301.90 391.5,296.97 392.5,293.31 393.5,290.99 394.5,290.03 395.5,290.44 396.5,292.22 397.5,295.35 398.5,299.78 399.5,305.44 400.5,312.25 401.5,320.13 402.5,328.95 403.5,338.58 404.5,348.90 405.5,359.74 406.5,370.97 407.5,382.41 408.5,393.90 409.5,405.27 410.5,416.38 411.5,427.04 412.5,437.12 413.5,446.46 414.5,454.94 415.5,462.43 416.5,468.83 417.5,474.03 418.5,477.98 419.5,480.60 420.5,481.88 421.5,481.77 422.5,480.30 423.5,477.47 424.5,473.33 425.5,467.94 426.5,461.37 427.5,453.73 428.5,445.11 429.5,435.65 430.5,425.48 431.5,414.73 432.5,403.58 433.5,392.18 434.5,380.68 435.5,369.27 436.5,358.09 437.5,347.31 438.5,337.09 439.5,327.57 440.5,318.88 441.5,311.16 442.5,304.51 443.5,299.03 444.5,294.80 445.5,291.87 446.5,290.29 447.5,290.08 448.5,291.25 449.5,293.78 450.5,297.63 451.5,302.74 452.5,309.05 453.5,316.46 454.5,324.87 455.5,334.15 456.5,344.18 457.5,354.81 458.5,365.88 459.5,377.24 460.5,388.73 461.5,400.18 462.5,411.42 463.5,422.31 464.5,432.67 465.5,442.36 466.5,451.24 467.5,459.19 468.5,466.09 469.5,471.84 470.5,476.36 471.5,479.59 472.5,481.47 473.5,481.99 474.5,481.13 475.5,478.91 476.5,475.35 477.5,470.52 478.5,464.47 479.5,457.30 480.5,449.10 481.5,440.01 482.5,430.13 483.5,419.63 484.5,408.64 485.5,397.33 486.5,385.86 487.5,374.38 488.5,363.08 489.5,352.10 490.5,341.61 491.5,331.76 492.5,322.68 493.5,314.51 494.5,307.37 495.5,301.35 496.5,296.54 497.5,293.02 498.5,290.83 499.5,290.01 500.5,290.56 501.5,292.48 502.5,295.74 503.5,300.29 504.5,306.07 505.5,313.00 506.5,320.97 507.5,329.88 508.5,339.59 509.5,349.96 510.5,360.85 511.5,372.10 512.5,383.56 513.5,395.04 514.5,406.40 515.5,417.46 516.5,428.08 517.5,438.09 518.5,447.35 519.5,455.74 520.5,463.12 521.5,469.40 522.5,474.48 523.5,478.30 524.5,480.79 525.5,481.93 526.5,481.69 527.5,480.07 528.5,477.11 529.5,472.85 530.5,467.33 531.5,460.66 532.5,452.91 533.5,444.20 534.5,434.66 535.5,424.42 536.5,413.64 537.5,402.45 538.5,391.03 539.5,379.54 540.5,368.14 541.5,356.99 542.5,346.26 543.5,336.10 544.5,326.66 545.5,318.07 546.5,310.45 547.5,303.91 548.5,298.55 549.5,294.44 550.5,291.65 551.5,290.21 552.5,290.14 553.5,291.44 554.5,294.11 555.5,298.08 556.5,303.32 557.5,309.74 558.5,317.26 559.5,325.76 560.5,335.13 561.5,345.22 562.5,355.90 563.5,367.01 564.5,378.39 565.5,389.88 566.5,401.32 567.5,412.53 568.5,423.37 569.5,433.67 570.5,443.28 571.5,452.08 572.5,459.93 573.5,466.72 574.5,472.35 575.5,476.74 576.5,479.84 577.5,481.59 578.5,481.97 579.5,480.97 580.5,478.61 581.5,474.92 582.5,469.96 583.5,463.80 584.5,456.52 585.5,448.23 586.5,439.05 587.5,429.11 588.5,418.55 589.5,407.52 590.5,396.19 591.5,384.71 592.5,373.24 593.5,361.96 594.5,351.03 595.5,340.60 596.5,330.81 597.5,321.82 598.5,313.75 599.5,306.71 600.5,300.81 601.5,296.13 602.5,292.74 603.5,290.69 604.5,290.00 605.5,290.69 606.5,292.74 607.5,296.13 608.5,300.81 609.5,306.71 610.5,313.75 611.5,321.82 612.5,330.81 613.5,340.60 614.5,351.03 615.5,361.96 616.5,373.24 617.5,384.71 618.5,396.19 619.5,407.52 620.5,418.55 621.5,429.11 622.5,439.05 623.5,448.23 624.5,456.52 625.5,463.80 626.5,469.96 627.5,474.92 628.5,478.61 629.5,480.97 630.5,481.97 631.5,481.59 632.5,479.84 633.5,476.74 634.5,472.35 635.5,466.72 636.5,459.93 637.5,452.08 638.5,443.28 639.5,433.67 640.5,423.37" stroke="#1e8ef0" stroke-width="2.4" fill="none" stroke-linejoin="round"/><polyline clip-path="url(#cp)" points="72.5,543.01 73.5,544.08 74.5,545.26 75.5,546.53 76.5,547.87 77.5,549.27 78.5,550.69 79.5,552.13 80.5,553.56 81.5,554.95 82.5,556.30 83.5,557.58 84.5,558.78 85.5,559.86 86.5,560.83 87.5,561.67 88.5,562.36 89.5,562.89 90.5,563.26 91.5,563.46 92.5,563.49 93.5,563.35 94.5,563.04 95.5,562.56 96.5,561.93 97.5,561.14 98.5,560.22 99.5,559.17 100.5,558.01 101.5,556.76 102.5,555.43 103.5,554.05 104.5,552.63 105.5,551.19 106.5,549.76 107.5,548.36 108.5,547.00 109.5,545.70 110.5,544.48 111.5,543.37 112.5,542.37 113.5,541.51 114.5,540.79 115.5,540.22 116.5,539.81 117.5,539.57 118.5,539.50 119.5,539.60 120.5,539.88 121.5,540.32 122.5,540.92 123.5,541.67 124.5,542.56 125.5,543.59 126.5,544.72 127.5,545.95 128.5,547.26 129.5,548.63 130.5,550.05 131.5,551.48 132.5,552.92 133.5,554.33 134.5,555.70 135.5,557.02 136.5,558.25 137.5,559.39 138.5,560.41 139.5,561.31 140.5,562.06 141.5,562.67 142.5,563.11 143.5,563.39 144.5,563.50 145.5,563.43 146.5,563.20 147.5,562.80 148.5,562.23 149.5,561.51 150.5,560.65 151.5,559.66 152.5,558.54 153.5,557.33 154.5,556.04 155.5,554.68 156.5,553.27 157.5,551.84 158.5,550.41 159.5,548.99 160.5,547.60 161.5,546.27 162.5,545.02 163.5,543.86 164.5,542.81 165.5,541.88 166.5,541.09 167.5,540.45 168.5,539.97 169.5,539.66 170.5,539.51 171.5,539.54 172.5,539.73 173.5,540.10 174.5,540.63 175.5,541.31 176.5,542.15 177.5,543.11 178.5,544.20 179.5,545.39 180.5,546.66 181.5,548.01 182.5,549.41 183.5,550.84 184.5,552.27 185.5,553.70 186.5,555.09 187.5,556.43 188.5,557.71 189.5,558.89 190.5,559.97 191.5,560.92 192.5,561.74 193.5,562.42 194.5,562.93 195.5,563.29 196.5,563.47 197.5,563.48 198.5,563.33 199.5,563.00 200.5,562.50 201.5,561.85 202.5,561.05 203.5,560.12 204.5,559.06 205.5,557.89 206.5,556.63 207.5,555.30 208.5,553.91 209.5,552.49 210.5,551.05 211.5,549.62 212.5,548.22 213.5,546.86 214.5,545.57 215.5,544.37 216.5,543.27 217.5,542.28 218.5,541.43 219.5,540.72 220.5,540.17 221.5,539.78 222.5,539.56 223.5,539.50 224.5,539.62 225.5,539.91 226.5,540.37 227.5,540.99 228.5,541.75 229.5,542.66 230.5,543.69 231.5,544.84 232.5,546.08 233.5,547.40 234.5,548.77 235.5,550.19 236.5,551.63 237.5,553.06 238.5,554.47 239.5,555.84 240.5,557.14 241.5,558.37 242.5,559.50 243.5,560.51 244.5,561.39 245.5,562.13 246.5,562.72 247.5,563.15 248.5,563.41 249.5,563.50 250.5,563.42 251.5,563.17 252.5,562.75 253.5,562.17 254.5,561.43 255.5,560.56 256.5,559.55 257.5,558.43 258.5,557.21 259.5,555.90 260.5,554.54 261.5,553.13 262.5,551.70 263.5,550.26 264.5,548.84 265.5,547.47 266.5,546.14 267.5,544.90 268.5,543.75 269.5,542.71 270.5,541.80 271.5,541.02 272.5,540.40 273.5,539.93 274.5,539.63 275.5,539.51 276.5,539.55 277.5,539.76 278.5,540.15 279.5,540.69 280.5,541.39 281.5,542.24 282.5,543.21 283.5,544.31 284.5,545.51 285.5,546.80 286.5,548.15 287.5,549.55 288.5,550.98 289.5,552.42 290.5,553.84 291.5,555.23 292.5,556.57 293.5,557.83 294.5,559.00 295.5,560.07 296.5,561.01 297.5,561.82 298.5,562.48 299.5,562.98 300.5,563.31 301.5,563.48 302.5,563.48 303.5,563.30 304.5,562.96 305.5,562.45 306.5,561.78 307.5,560.97 308.5,560.02 309.5,558.95 310.5,557.77 311.5,556.50 312.5,555.16 313.5,553.77 314.5,552.34 315.5,550.91 316.5,549.48 317.5,548.08 318.5,546.73 319.5,545.45 320.5,544.25 321.5,543.16 322.5,542.19 323.5,541.35 324.5,540.66 325.5,540.12 326.5,539.75 327.5,539.54 328.5,539.51 329.5,539.65 330.5,539.95 331.5,540.43 332.5,541.06 333.5,541.84 334.5,542.76 335.5,543.80 336.5,544.96 337.5,546.21 338.5,547.53 339.5,548.91 340.5,550.33 341.5,551.77 342.5,553.20 343.5,554.61 344.5,555.97 345.5,557.27 346.5,558.49 347.5,559.60 348.5,560.60 349.5,561.47 350.5,562.20 351.5,562.77 352.5,563.18 353.5,563.43 354.5,563.50 355.5,563.40 356.5,563.13 357.5,562.70 358.5,562.10 359.5,561.35 360.5,560.46 361.5,559.44 362.5,558.31 363.5,557.08 364.5,555.77 365.5,554.40 366.5,552.99 367.5,551.55 368.5,550.12 369.5,548.70 370.5,547.33 371.5,546.02 372.5,544.78 373.5,543.64 374.5,542.61 375.5,541.71 376.5,540.95 377.5,540.34 378.5,539.90 379.5,539.61 380.5,539.50 381.5,539.56 382.5,539.79 383.5,540.19 384.5,540.75 385.5,541.47 386.5,542.33 387.5,543.32 388.5,544.43 389.5,545.64 390.5,546.93 391.5,548.29 392.5,549.69 393.5,551.12 394.5,552.56 395.5,553.98 396.5,555.37 397.5,556.70 398.5,557.95 399.5,559.11 400.5,560.17 401.5,561.10 402.5,561.89 403.5,562.53 404.5,563.02 405.5,563.34 406.5,563.49 407.5,563.47 408.5,563.27 409.5,562.91 410.5,562.39 411.5,561.70 412.5,560.88 413.5,559.92 414.5,558.83 415.5,557.64 416.5,556.37 417.5,555.02 418.5,553.63 419.5,552.20 420.5,550.76 421.5,549.34 422.5,547.94 423.5,546.60 424.5,545.32 425.5,544.14 426.5,543.06 427.5,542.10 428.5,541.28 429.5,540.60 430.5,540.08 431.5,539.72 432.5,539.53 433.5,539.51 434.5,539.67 435.5,539.99 436.5,540.48 437.5,541.13 438.5,541.92 439.5,542.86 440.5,543.91 441.5,545.08 442.5,546.34 443.5,547.67 444.5,549.06 445.5,550.48 446.5,551.91 447.5,553.34 448.5,554.75 449.5,556.10 450.5,557.40 451.5,558.60 452.5,559.71 453.5,560.70 454.5,561.55 455.5,562.26 456.5,562.82 457.5,563.21 458.5,563.44 459.5,563.50 460.5,563.38 461.5,563.09 462.5,562.64 463.5,562.03 464.5,561.27 465.5,560.36 466.5,559.33 467.5,558.19 468.5,556.95 469.5,555.64 470.5,554.26 471.5,552.84 472.5,551.41 473.5,549.98 474.5,548.57 475.5,547.20 476.5,545.89 477.5,544.66 478.5,543.53 479.5,542.52 480.5,541.63 481.5,540.88 482.5,540.29 483.5,539.86 484.5,539.59 485.5,539.50 486.5,539.58 487.5,539.83 488.5,540.24 489.5,540.82 490.5,541.55 491.5,542.42 492.5,543.42 493.5,544.54 494.5,545.76 495.5,547.06 496.5,548.43 497.5,549.83 498.5,551.27 499.5,552.70 500.5,554.12 501.5,555.50 502.5,556.82 503.5,558.07 504.5,559.22 505.5,560.27 506.5,561.18 507.5,561.96 508.5,562.59 509.5,563.06 510.5,563.36 511.5,563.49 512.5,563.45 513.5,563.24 514.5,562.87 515.5,562.32 516.5,561.63 517.5,560.79 518.5,559.81 519.5,558.72 520.5,557.52 521.5,556.24 522.5,554.89 523.5,553.49 524.5,552.06 525.5,550.62 526.5,549.20 527.5,547.81 528.5,546.47 529.5,545.20 530.5,544.03 531.5,542.96 532.5,542.01 533.5,541.20 534.5,540.54 535.5,540.03 536.5,539.69 537.5,539.52 538.5,539.52 539.5,539.69 540.5,540.03 541.5,540.54 542.5,541.20 543.5,542.01 544.5,542.96 545.5,544.03 546.5,545.20 547.5,546.47 548.5,547.81 549.5,549.20 550.5,550.62 551.5,552.06 552.5,553.49 553.5,554.89 554.5,556.24 555.5,557.52 556.5,558.72 557.5,559.81 558.5,560.79 559.5,561.63 560.5,562.32 561.5,562.87 562.5,563.24 563.5,563.45 564.5,563.49 565.5,563.36 566.5,563.06 567.5,562.59 568.5,561.96 569.5,561.18 570.5,560.27 571.5,559.22 572.5,558.07 573.5,556.82 574.5,555.50 575.5,554.12 576.5,552.70 577.5,551.27 578.5,549.83 579.5,548.43 580.5,547.06 581.5,545.76 582.5,544.54 583.5,543.42 584.5,542.42 585.5,541.55 586.5,540.82 587.5,540.24 588.5,539.83 589.5,539.58 590.5,539.50 591.5,539.59 592.5,539.86 593.5,540.29 594.5,540.88 595.5,541.63 596.5,542.52 597.5,543.53 598.5,544.66 599.5,545.89 600.5,547.20 601.5,548.57 602.5,549.98 603.5,551.41 604.5,552.84 605.5,554.26 606.5,555.64 607.5,556.95 608.5,558.19 609.5,559.33 610.5,560.36 611.5,561.27 612.5,562.03 613.5,562.64 614.5,563.09 615.5,563.38 616.5,563.50 617.5,563.44 618.5,563.21 619.5,562.82 620.5,562.26 621.5,561.55 622.5,560.70 623.5,559.71 624.5,558.60 625.5,557.40 626.5,556.10 627.5,554.75 628.5,553.34 629.5,551.91 630.5,550.48 631.5,549.06 632.5,547.67 633.5,546.34 634.5,545.08 635.5,543.91 636.5,542.86 637.5,541.92 638.5,541.13 639.5,540.48 640.5,539.99" stroke="#0e8a34" stroke-width="2.6" fill="none" stroke-linejoin="round"/><path d="M641 570.30H654M641 566.62H650M641 562.94H650M641 559.27H650M641 555.59H650M641 551.91H650M641 548.23H650M641 544.55H650M641 540.88H650M641 537.20H650M641 533.52H654M641 529.84H650M641 526.16H650M641 522.49H650M641 518.81H650M641 515.13H650M641 511.45H650M641 507.77H650M641 504.10H650M641 500.42H650M641 496.74H654M641 493.06H650M641 489.38H650M641 485.71H650M641 482.03H650M641 478.35H650M641 474.67H650M641 470.99H650M641 467.32H650M641 463.64H650M641 459.96H654M641 456.28H650M641 452.60H650M641 448.93H650M641 445.25H650M641 441.57H650M641 437.89H650M641 434.21H650M641 430.54H650M641 426.86H650M641 423.18H654M641 419.50H650M641 415.82H650M641 412.15H650M641 408.47H650M641 404.79H650M641 401.11H650M641 397.43H650M641 393.76H650M641 390.08H650M641 386.40H654M641 382.72H650M641 379.04H650M641 375.37H650M641 371.69H650M641 368.01H650M641 364.33H650M641 360.65H650M641 356.98H650M641 353.30H650M641 349.62H654M641 345.94H650M641 342.26H650M641 338.59H650M641 334.91H650M641 331.23H650M641 327.55H650M641 323.87H650M641 320.20H650M641 316.52H650M641 312.84H654M641 309.16H650M641 305.48H650M641 301.81H650M641 298.13H650M641 294.45H650M641 290.77H650M641 287.09H650M641 283.42H650M641 279.74H650M641 276.06H654M641 272.38H650M641 268.70H650M641 265.03H650M641 261.35H650M641 257.67H650M641 253.99H650M641 250.31H650M641 246.64H650M641 242.96H650M641 239.28H654M641 235.60H650M641 231.92H650M641 228.25H650M641 224.57H650M641 220.89H650M641 217.21H650M641 213.53H650M641 209.86H650M641 206.18H650M641 202.50H654" stroke="#7a7a7a" stroke-width="1.3" fill="none"/></svg>
<div class="t" style="left:658.00px;top:196.89px;font-size:13.2px;color:#555;font-weight:normal;font-family:'Liberation Mono',monospace;transform-origin:left top;transform:scaleX(0.7);">100</div>
<div class="t" style="left:656.00px;top:564.89px;font-size:13.2px;color:#555;font-weight:normal;font-family:'Liberation Mono',monospace;transform-origin:left top;transform:scaleX(0.7);">0</div>
<div class="t" style="right:831.00px;top:178.28px;font-size:13.6px;color:#e8a070;font-weight:normal;font-family:'Liberation Mono',monospace;transform-origin:right top;transform:scaleX(0.66);">100.0</div>
<div class="t" style="right:831.00px;top:191.48px;font-size:13.6px;color:#b8404a;font-weight:normal;font-family:'Liberation Mono',monospace;transform-origin:right top;transform:scaleX(0.66);">100</div>
<div class="t" style="right:831.00px;top:204.68px;font-size:13.6px;color:#4a90cc;font-weight:normal;font-family:'Liberation Mono',monospace;transform-origin:right top;transform:scaleX(0.66);">100.0</div>
<div class="t" style="right:831.00px;top:217.88px;font-size:13.6px;color:#4a9050;font-weight:normal;font-family:'Liberation Mono',monospace;transform-origin:right top;transform:scaleX(0.66);">1000</div>
<div class="t" style="right:831.00px;top:540.88px;font-size:13.6px;color:#e8a070;font-weight:normal;font-family:'Liberation Mono',monospace;transform-origin:right top;transform:scaleX(0.66);">-100.0</div>
<div class="t" style="right:831.00px;top:553.78px;font-size:13.6px;color:#b8404a;font-weight:normal;font-family:'Liberation Mono',monospace;transform-origin:right top;transform:scaleX(0.66);">0</div>
<div class="t" style="right:831.00px;top:567.18px;font-size:13.6px;color:#4a90cc;font-weight:normal;font-family:'Liberation Mono',monospace;transform-origin:right top;transform:scaleX(0.66);">0.0</div>
<div class="t" style="right:831.00px;top:580.58px;font-size:13.6px;color:#4a9050;font-weight:normal;font-family:'Liberation Mono',monospace;transform-origin:right top;transform:scaleX(0.66);">0</div>
<div style="position:absolute;left:108.5px;top:166px;width:60.0px;height:22px;overflow:hidden"><div class="t" style="left:0;top:2.3px;font-size:11.2px;line-height:9.1px;font-weight:bold;color:#2a2a2a;transform-origin:left top;transform:scaleX(0.77)">2020/03/10<br>16:01:49</div></div>
<div style="position:absolute;left:196.0px;top:166px;width:60.0px;height:22px;overflow:hidden"><div class="t" style="left:0;top:2.3px;font-size:11.2px;line-height:9.1px;font-weight:bold;color:#2a2a2a;transform-origin:left top;transform:scaleX(0.77)">2020/03/10<br>16:03:29</div></div>
<div style="position:absolute;left:283.5px;top:166px;width:60.0px;height:22px;overflow:hidden"><div class="t" style="left:0;top:2.3px;font-size:11.2px;line-height:9.1px;font-weight:bold;color:#2a2a2a;transform-origin:left top;transform:scaleX(0.77)">2020/03/10<br>16:05:09</div></div>
<div style="position:absolute;left:371.1px;top:166px;width:60.0px;height:22px;overflow:hidden"><div class="t" style="left:0;top:2.3px;font-size:11.2px;line-height:9.1px;font-weight:bold;color:#2a2a2a;transform-origin:left top;transform:scaleX(0.77)">2020/03/10<br>16:06:49</div></div>
<div style="position:absolute;left:458.6px;top:166px;width:60.0px;height:22px;overflow:hidden"><div class="t" style="left:0;top:2.3px;font-size:11.2px;line-height:9.1px;font-weight:bold;color:#2a2a2a;transform-origin:left top;transform:scaleX(0.77)">2020/03/10<br>16:08:29</div></div>
<div style="position:absolute;left:546.1px;top:166px;width:60.0px;height:22px;overflow:hidden"><div class="t" style="left:0;top:2.3px;font-size:11.2px;line-height:9.1px;font-weight:bold;color:#2a2a2a;transform-origin:left top;transform:scaleX(0.77)">2020/03/10<br>16:10:09</div></div>
<div style="position:absolute;left:633.6px;top:166px;width:7.4px;height:22px;overflow:hidden"><div class="t" style="left:0;top:2.3px;font-size:11.2px;line-height:9.1px;font-weight:bold;color:#2a2a2a;transform-origin:left top;transform:scaleX(0.77)">2020/03/10<br>16:11:49</div></div>
<div style="position:absolute;left:0px;top:607px;width:72.5px;height:20px;background:#e9e9e9"></div>
<div style="position:absolute;left:72.5px;top:607px;width:568.5px;height:20px;background:#efefef"></div>
<div style="position:absolute;left:641px;top:607px;width:255px;height:20px;background:#ebebe9"></div>
<svg style="position:absolute;left:0;top:600px" width="700" height="27"><path d="M78.3 17.4L82.3 14V20.8Z" fill="#222"/><rect x="614.5" y="11.3" width="12" height="11.7" fill="#bdbdbd"/><path d="M632.5 14V20.8L635.8 17.4Z" fill="#888"/></svg>
<div style="position:absolute;left:680px;top:166px;width:216px;height:101px;background:#7a7f82"></div>
<div style="position:absolute;left:709px;top:166px;width:187px;height:101px;background:linear-gradient(#e8e9e5 0%,#e0e1dd 9%,#d4d6d1 19%,#c8cbc6 29%,#bfc3bf 39%,#b8bcb8 48%,#b5b7b4 60%,#aeb0ad 83%,#9aa1a3 85.5%,#8f979a 95%,#858d90 100%)"></div>
<div style="position:absolute;left:680px;top:267px;width:216px;height:1px;background:#f6f8f6"></div>
<div style="position:absolute;left:709px;top:166px;width:2px;height:98px;background:linear-gradient(#f0f0ee,#c0c3bf)"></div>
<div style="position:absolute;left:680px;top:166px;width:29px;height:101px;background:linear-gradient(#4a3f3b 0%,#433733 35%,#2f221e 75%,#281b17 100%)"></div>
<div style="position:absolute;left:683px;top:166.8px;width:23.2px;height:33px;background:#5a524e"></div>
<div style="position:absolute;left:684.1px;top:167.2px;width:21.5px;height:31.6px;background:#f5861f"></div>
<div style="position:absolute;left:713.8px;top:253.2px;width:175.8px;height:10.8px;background:#f5861f"></div>
<div class="t" style="left:694.40px;top:199.16px;font-size:16.5px;color:#fff;font-weight:normal;font-family:'Liberation Mono',monospace;transform-origin:center top;transform:translateX(-50%) scaleX(0.62);">1</div>
<div class="t" style="left:710.80px;top:165.66px;font-size:18.2px;color:#000;font-weight:bold;font-family:'Liberation Mono',monospace;transform-origin:left top;transform:scaleX(0.83);">Gas Turbine</div>
<div class="t" style="left:717.70px;top:182.64px;font-size:13.66px;color:#2a0a1a;font-weight:normal;font-family:'Liberation Mono',monospace;transform-origin:left top;transform:scaleX(0.77);-webkit-text-stroke:0.45px #2a0a1a;">Waste Heat Flow Amount</div>
<div class="t" style="left:740.00px;top:198.33px;font-size:30.9px;color:#000;font-weight:normal;font-family:'Liberation Mono',monospace;transform-origin:left top;transform:scaleX(0.786);-webkit-text-stroke:0.6px #000;">54.5</div>
<div class="t" style="right:12.50px;top:232.62px;font-size:11.2px;color:#2a0a1a;font-weight:normal;font-family:'Liberation Mono',monospace;transform-origin:right top;transform:scaleX(0.92);-webkit-text-stroke:0.3px #2a0a1a;">[g/s]</div>
<div style="position:absolute;left:680px;top:279px;width:216px;height:101px;background:#7a7f82"></div>
<div style="position:absolute;left:709px;top:279px;width:187px;height:101px;background:linear-gradient(#e8e9e5 0%,#e0e1dd 9%,#d4d6d1 19%,#c8cbc6 29%,#bfc3bf 39%,#b8bcb8 48%,#b5b7b4 60%,#aeb0ad 83%,#9aa1a3 85.5%,#8f979a 95%,#858d90 100%)"></div>
<div style="position:absolute;left:680px;top:380px;width:216px;height:1px;background:#f6f8f6"></div>
<div style="position:absolute;left:709px;top:279px;width:2px;height:98px;background:linear-gradient(#f0f0ee,#c0c3bf)"></div>
<div style="position:absolute;left:680px;top:279px;width:29px;height:101px;background:linear-gradient(#4a3f3b 0%,#433733 35%,#2f221e 75%,#281b17 100%)"></div>
<div style="position:absolute;left:683px;top:279.8px;width:23.2px;height:33px;background:#5a524e"></div>
<div style="position:absolute;left:684.1px;top:280.2px;width:21.5px;height:31.6px;background:#ff1010"></div>
<div style="position:absolute;left:713.8px;top:366.2px;width:175.8px;height:10.8px;background:#ff1010"></div>
<div class="t" style="left:694.40px;top:312.16px;font-size:16.5px;color:#fff;font-weight:normal;font-family:'Liberation Mono',monospace;transform-origin:center top;transform:translateX(-50%) scaleX(0.62);">2</div>
<div class="t" style="left:710.80px;top:278.66px;font-size:18.2px;color:#000;font-weight:bold;font-family:'Liberation Mono',monospace;transform-origin:left top;transform:scaleX(0.83);">Gas Turbine</div>
<div class="t" style="left:717.70px;top:295.64px;font-size:13.66px;color:#2a0a1a;font-weight:normal;font-family:'Liberation Mono',monospace;transform-origin:left top;transform:scaleX(0.77);-webkit-text-stroke:0.45px #2a0a1a;">Fuel Consumption</div>
<div class="t" style="left:740.00px;top:311.33px;font-size:30.9px;color:#000;font-weight:normal;font-family:'Liberation Mono',monospace;transform-origin:left top;transform:scaleX(0.786);-webkit-text-stroke:0.6px #000;">30</div>
<div class="t" style="right:12.50px;top:345.62px;font-size:11.2px;color:#2a0a1a;font-weight:normal;font-family:'Liberation Mono',monospace;transform-origin:right top;transform:scaleX(0.92);-webkit-text-stroke:0.3px #2a0a1a;">[kW]</div>
<div style="position:absolute;left:680px;top:392px;width:216px;height:101px;background:#7a7f82"></div>
<div style="position:absolute;left:709px;top:392px;width:187px;height:101px;background:linear-gradient(#e8e9e5 0%,#e0e1dd 9%,#d4d6d1 19%,#c8cbc6 29%,#bfc3bf 39%,#b8bcb8 48%,#b5b7b4 60%,#aeb0ad 83%,#9aa1a3 85.5%,#8f979a 95%,#858d90 100%)"></div>
<div style="position:absolute;left:680px;top:493px;width:216px;height:1px;background:#f6f8f6"></div>
<div style="position:absolute;left:709px;top:392px;width:2px;height:98px;background:linear-gradient(#f0f0ee,#c0c3bf)"></div>
<div style="position:absolute;left:680px;top:392px;width:29px;height:101px;background:linear-gradient(#4a3f3b 0%,#433733 35%,#2f221e 75%,#281b17 100%)"></div>
<div style="position:absolute;left:683px;top:392.8px;width:23.2px;height:33px;background:#5a524e"></div>
<div style="position:absolute;left:684.1px;top:393.2px;width:21.5px;height:31.6px;background:#1a86f5"></div>
<div style="position:absolute;left:713.8px;top:479.2px;width:175.8px;height:10.8px;background:#1a86f5"></div>
<div class="t" style="left:694.40px;top:425.16px;font-size:16.5px;color:#fff;font-weight:normal;font-family:'Liberation Mono',monospace;transform-origin:center top;transform:translateX(-50%) scaleX(0.62);">3</div>
<div class="t" style="left:710.80px;top:391.66px;font-size:18.2px;color:#000;font-weight:bold;font-family:'Liberation Mono',monospace;transform-origin:left top;transform:scaleX(0.83);">Gas Turbine</div>
<div class="t" style="left:717.70px;top:408.64px;font-size:13.66px;color:#2a0a1a;font-weight:normal;font-family:'Liberation Mono',monospace;transform-origin:left top;transform:scaleX(0.77);-webkit-text-stroke:0.45px #2a0a1a;">Power Generation Efficiency</div>
<div class="t" style="left:740.00px;top:424.33px;font-size:30.9px;color:#000;font-weight:normal;font-family:'Liberation Mono',monospace;transform-origin:left top;transform:scaleX(0.786);-webkit-text-stroke:0.6px #000;">43.9</div>
<div class="t" style="right:12.50px;top:458.62px;font-size:11.2px;color:#2a0a1a;font-weight:normal;font-family:'Liberation Mono',monospace;transform-origin:right top;transform:scaleX(0.92);-webkit-text-stroke:0.3px #2a0a1a;">[]</div>
<div style="position:absolute;left:680px;top:505px;width:216px;height:101px;background:#7a7f82"></div>
<div style="position:absolute;left:709px;top:505px;width:187px;height:101px;background:linear-gradient(#e8e9e5 0%,#e0e1dd 9%,#d4d6d1 19%,#c8cbc6 29%,#bfc3bf 39%,#b8bcb8 48%,#b5b7b4 60%,#aeb0ad 83%,#9aa1a3 85.5%,#8f979a 95%,#858d90 100%)"></div>
<div style="position:absolute;left:680px;top:606px;width:216px;height:1px;background:#f6f8f6"></div>
<div style="position:absolute;left:709px;top:505px;width:2px;height:98px;background:linear-gradient(#f0f0ee,#c0c3bf)"></div>
<div style="position:absolute;left:680px;top:505px;width:29px;height:101px;background:linear-gradient(#4a3f3b 0%,#433733 35%,#2f221e 75%,#281b17 100%)"></div>
<div style="position:absolute;left:683px;top:505.8px;width:23.2px;height:33px;background:#5a524e"></div>
<div style="position:absolute;left:684.1px;top:506.2px;width:21.5px;height:31.6px;background:#0f8c1e"></div>
<div style="position:absolute;left:713.8px;top:592.2px;width:175.8px;height:10.8px;background:#0f8c1e"></div>
<div class="t" style="left:694.40px;top:538.16px;font-size:16.5px;color:#fff;font-weight:normal;font-family:'Liberation Mono',monospace;transform-origin:center top;transform:translateX(-50%) scaleX(0.62);">4</div>
<div class="t" style="left:710.80px;top:504.66px;font-size:18.2px;color:#000;font-weight:bold;font-family:'Liberation Mono',monospace;transform-origin:left top;transform:scaleX(0.83);">Gas Turbine</div>
<div class="t" style="left:717.70px;top:521.64px;font-size:13.66px;color:#2a0a1a;font-weight:normal;font-family:'Liberation Mono',monospace;transform-origin:left top;transform:scaleX(0.77);-webkit-text-stroke:0.45px #2a0a1a;">Amount of Power Required</div>
<div class="t" style="left:740.00px;top:537.33px;font-size:30.9px;color:#000;font-weight:normal;font-family:'Liberation Mono',monospace;transform-origin:left top;transform:scaleX(0.786);-webkit-text-stroke:0.6px #000;">83</div>
<div class="t" style="right:12.50px;top:571.62px;font-size:11.2px;color:#2a0a1a;font-weight:normal;font-family:'Liberation Mono',monospace;transform-origin:right top;transform:scaleX(0.92);-webkit-text-stroke:0.3px #2a0a1a;">[kW]</div>
</body></html>
